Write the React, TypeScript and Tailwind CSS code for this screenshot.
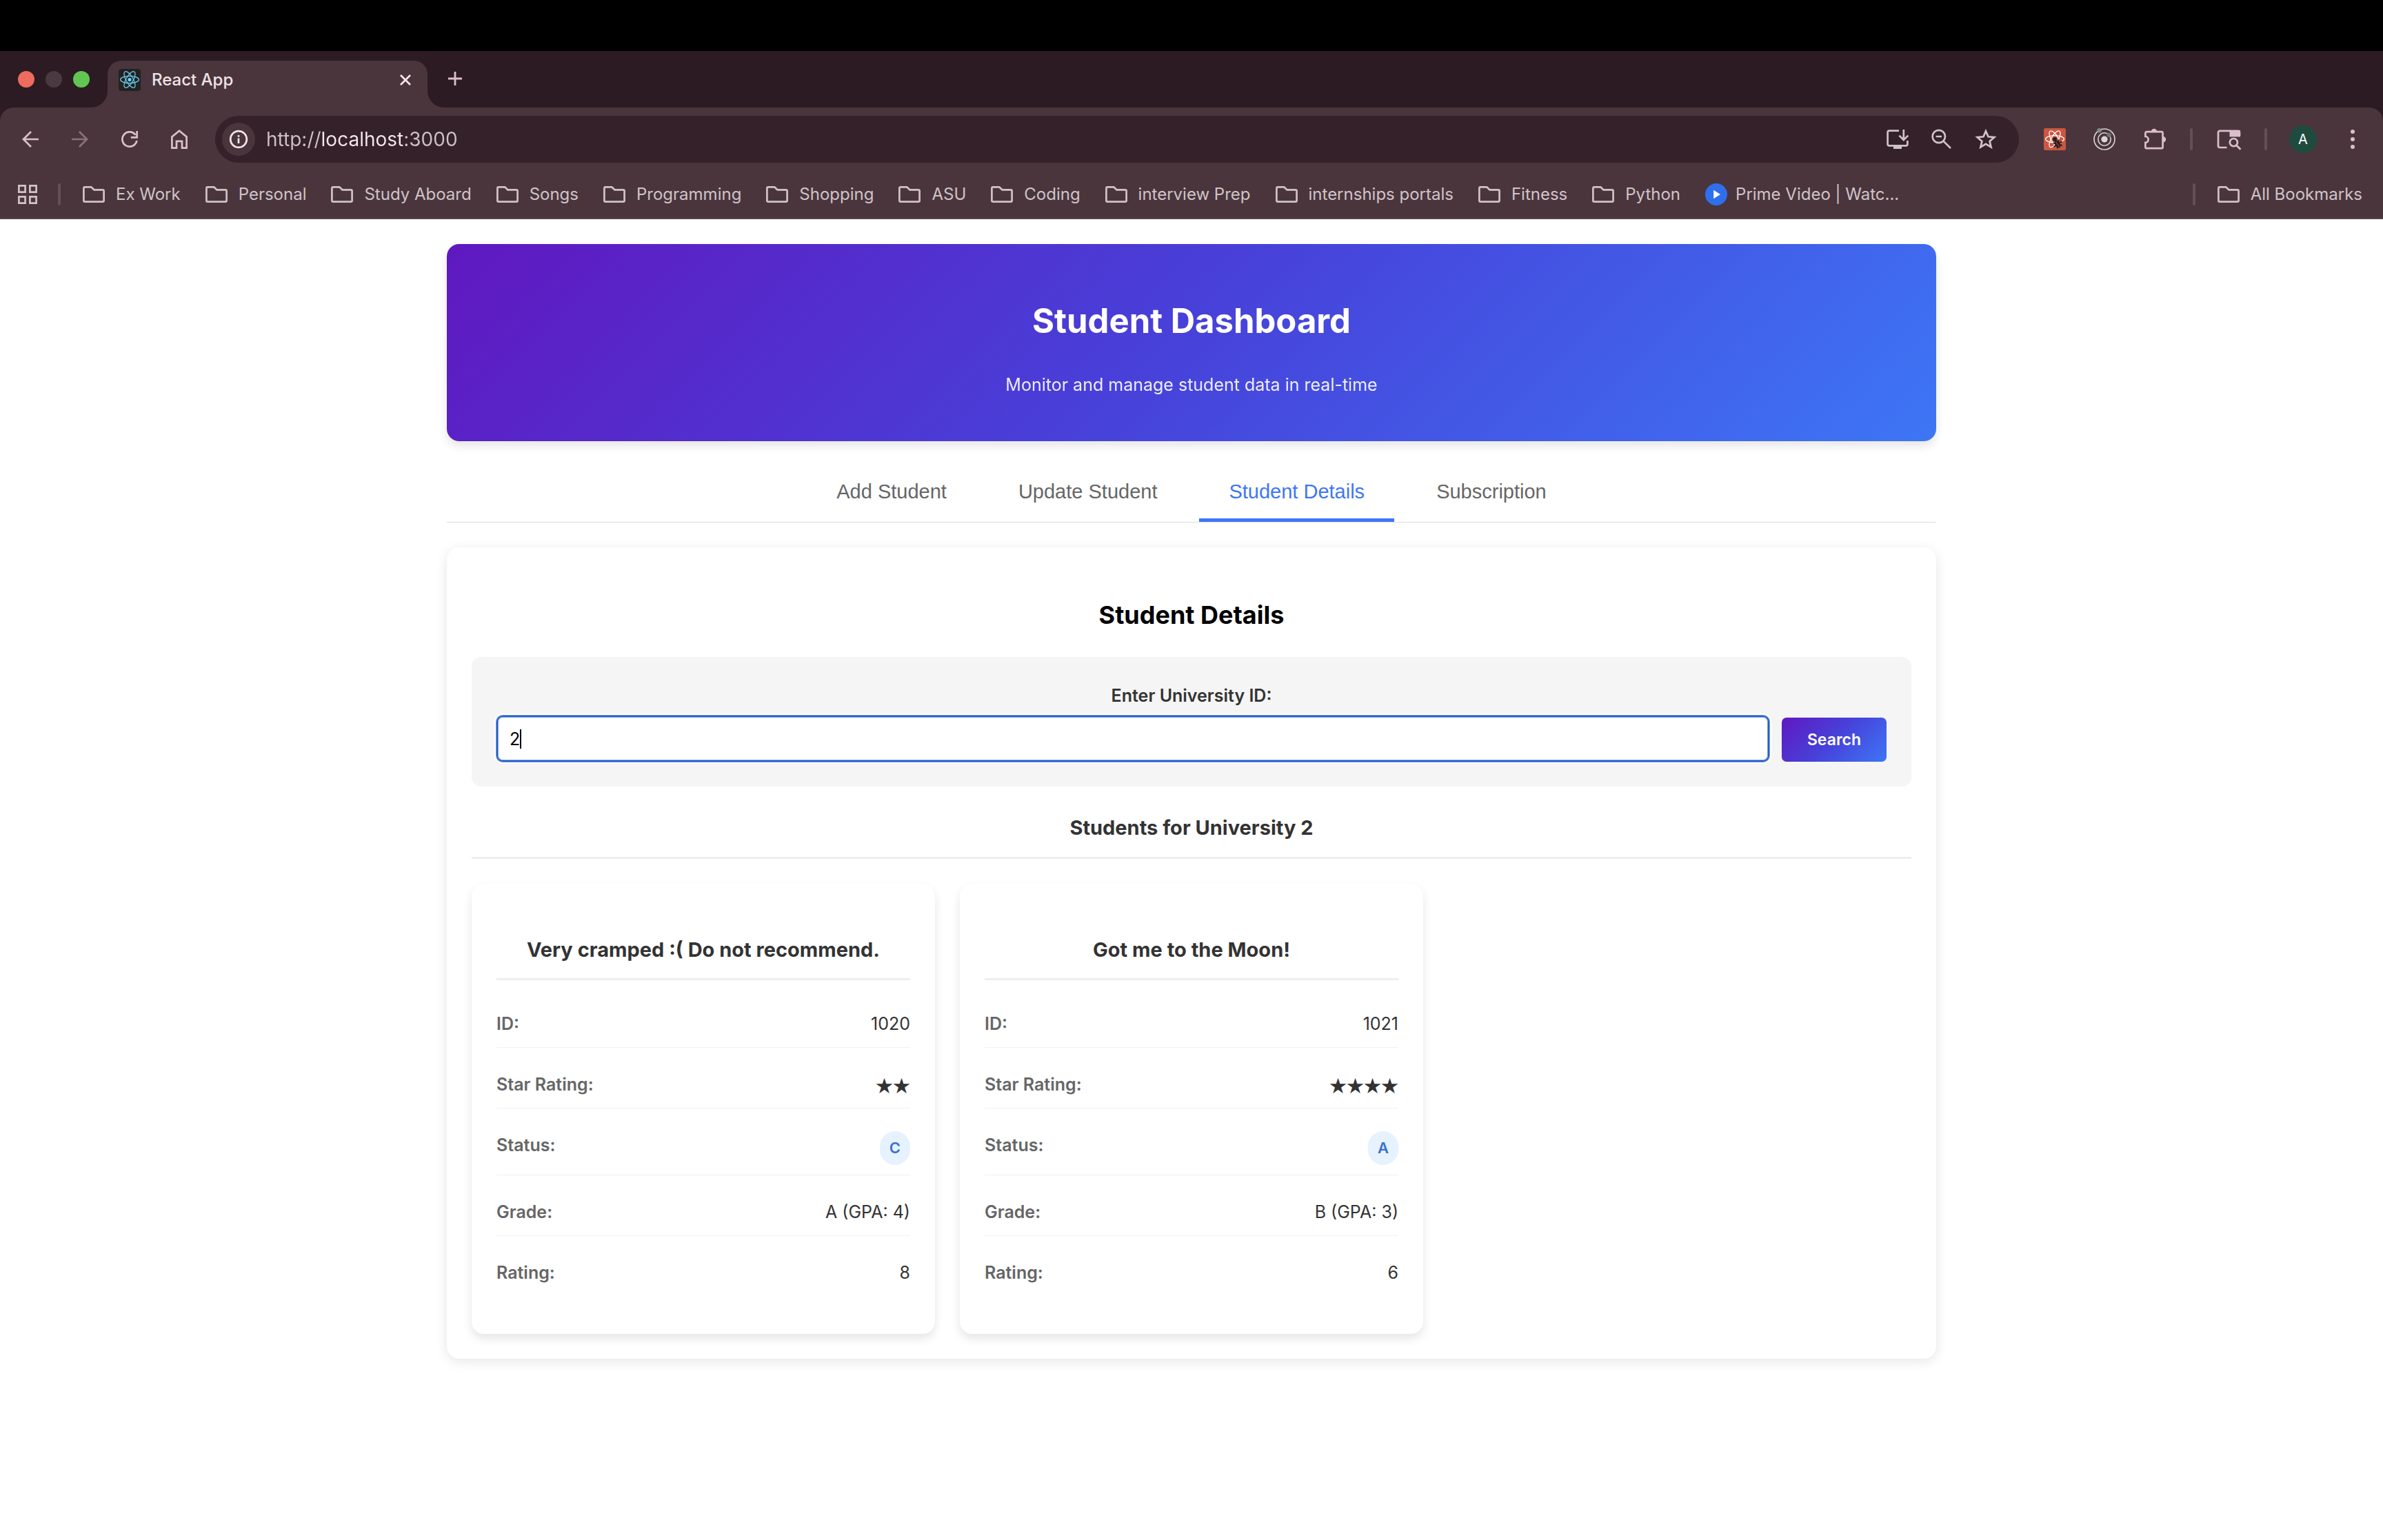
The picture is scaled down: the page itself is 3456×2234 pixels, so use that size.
import React from "react";

type IconProps = { children: React.ReactNode; className?: string };

function Icon({ children, className = "text-[#dcbfca]" }: IconProps) {
  return (
    <svg
      viewBox="0 0 32 32"
      width="32"
      height="32"
      fill="none"
      stroke="currentColor"
      strokeWidth="2.7"
      aria-hidden="true"
      className={`shrink-0 overflow-visible ${className}`}
    >
      {children}
    </svg>
  );
}

function FolderIcon() {
  return (
    <Icon className="text-[#d0c3c7]">
      <path
        d="M1.4 25.2V6.8a1.6 1.6 0 0 1 1.6-1.5h9.2l4.4 4.1H29a1.6 1.6 0 0 1 1.6 1.6v14.2a1.6 1.6 0 0 1-1.6 1.5H3a1.6 1.6 0 0 1-1.6-1.5Z"
        strokeLinejoin="round"
      />
    </Icon>
  );
}

function PrimeIcon() {
  return (
    <Icon>
      <circle cx="16" cy="16" r="16" fill="#2f6fec" stroke="none" />
      <path d="M12.2 9.8v12.4L22 16Z" fill="#fff" stroke="none" />
    </Icon>
  );
}

function ReactFavicon() {
  return (
    <Icon className="text-[#6fd3f5]">
      <rect width="32" height="32" rx="4" fill="#222222" stroke="none" />
      <circle cx="16" cy="15.5" r="2.6" fill="currentColor" stroke="none" />
      <g strokeWidth="1.2">
        <ellipse cx="16" cy="15.5" rx="13.4" ry="5.1" />
        <ellipse cx="16" cy="15.5" rx="13.4" ry="5.1" transform="rotate(60 16 15.5)" />
        <ellipse cx="16" cy="15.5" rx="13.4" ry="5.1" transform="rotate(120 16 15.5)" />
      </g>
    </Icon>
  );
}

function ReactDevToolsIcon() {
  return (
    <Icon className="text-white">
      <rect width="32" height="32" rx="2.5" fill="#cb5641" stroke="none" />
      <g strokeWidth="1.3">
        <ellipse cx="16" cy="15.8" rx="13.4" ry="5.1" />
        <ellipse cx="16" cy="15.8" rx="13.4" ry="5.1" transform="rotate(60 16 15.8)" />
        <ellipse cx="16" cy="15.8" rx="13.4" ry="5.1" transform="rotate(120 16 15.8)" />
      </g>
      <path d="M16.5 19.5l7-3.5 5 5v8h-13Z" fill="#cb5641" stroke="none" />
      <g fill="#231f20" stroke="none">
        <circle cx="16" cy="16" r="3" />
        <ellipse cx="20" cy="23" rx="3.6" ry="6" transform="rotate(-33 20 23)" />
      </g>
      <path
        d="M13.5 21.5l3.5.5M14.6 27l3.2-2.4M19.6 29.5l.4-3M21.6 16.5l-.6 3.5M26.4 19.6l-3.6 1M26.8 25.2l-3-1"
        stroke="#231f20"
        strokeWidth="1.8"
      />
      <path d="M17.6 19.6l5 7.4" stroke="#cb5641" strokeWidth="1" />
    </Icon>
  );
}

function TargetIcon() {
  return (
    <Icon className="text-[#d9d6d7]">
      <circle cx="16" cy="16" r="15" strokeWidth="1.6" />
      <circle cx="16" cy="16" r="9.2" strokeWidth="1.6" />
      <circle cx="16" cy="16" r="4.6" fill="currentColor" stroke="none" />
      <circle cx="8.6" cy="3.2" r="3.2" fill="#86898a" stroke="none" />
      <circle cx="22.6" cy="9.6" r="3.2" fill="#6f7573" stroke="none" />
    </Icon>
  );
}

const bookmarks = [
  "Ex Work",
  "Personal",
  "Study Aboard",
  "Songs",
  "Programming",
  "Shopping",
  "ASU",
  "Coding",
  "interview Prep",
  "internships portals",
  "Fitness",
  "Python",
];

const tabs = ["Add Student", "Update Student", "Student Details", "Subscription"];

const students = [
  { name: "Very cramped :( Do not recommend.", id: "1020", stars: 2, status: "C", grade: "A (GPA: 4)", rating: "8" },
  { name: "Got me to the Moon!", id: "1021", stars: 4, status: "A", grade: "B (GPA: 3)", rating: "6" },
];

function TabStrip() {
  return (
    <div className="flex h-[82px] items-end bg-[#2c1b22]">
      <div className="flex h-[82px] items-center gap-4 pl-[26px]">
        <span className="size-6 rounded-full bg-[#ed6b5f]" />
        <span className="size-6 rounded-full bg-[#4a3a40]" />
        <span className="size-6 rounded-full bg-[#61c554]" />
      </div>
      <div className="relative ml-[26px] flex h-[68px] w-[464px] items-center rounded-t-[20px] bg-[#4a353d] pr-5 pb-3 pl-4">
        <svg viewBox="0 0 24 24" className="absolute bottom-0 -left-6 size-6 text-[#4a353d]" aria-hidden="true">
          <path d="M24 0v24H0A24 24 0 0 0 24 0Z" fill="currentColor" />
        </svg>
        <ReactFavicon />
        <span className="ml-4 flex-1 text-[24px] leading-8 font-medium text-[#efe2e6]">React App</span>
        <button type="button" aria-label="Close tab" className="text-[#f3e4e9]">
          <svg viewBox="0 0 24 24" className="size-6" fill="none" stroke="currentColor" strokeWidth="2.8" aria-hidden="true">
            <path d="M5 5l14 14M19 5L5 19" />
          </svg>
        </button>
        <svg viewBox="0 0 24 24" className="absolute -right-6 bottom-0 size-6 text-[#4a353d]" aria-hidden="true">
          <path d="M0 0v24h24A24 24 0 0 1 0 0Z" fill="currentColor" />
        </svg>
      </div>
      <button type="button" aria-label="New tab" className="ml-7 h-[84px] text-[#dcbfca]">
        <svg viewBox="0 0 24 24" className="size-6" fill="none" stroke="currentColor" strokeWidth="2.8" aria-hidden="true">
          <path d="M12 2v20M2 12h20" />
        </svg>
      </button>
    </div>
  );
}

function Divider() {
  return <span className="h-8 w-1 shrink-0 rounded-full bg-[#654e57]" />;
}

function Toolbar() {
  return (
    <div className="flex h-[92px] items-center px-7">
      <div className="flex gap-10">
        <button type="button" aria-label="Back">
          <Icon>
            <path d="M28 16H6M17 5L6 16l11 11" />
          </Icon>
        </button>
        <button type="button" aria-label="Forward">
          <Icon className="text-[#8a727b]">
            <path d="M4 16h22M15 5l11 11-11 11" />
          </Icon>
        </button>
        <button type="button" aria-label="Reload">
          <Icon>
            <path d="M26.4 18A10.6 10.6 0 1 1 24.5 9.7M26.6 4v9.4H17.8" />
          </Icon>
        </button>
        <button type="button" aria-label="Home">
          <Icon>
            <path d="M5.4 28.6V12.4L16 3.8l10.6 8.6v16.2H20v-9.8h-8v9.8Z" />
          </Icon>
        </button>
      </div>
      <div className="ml-9 flex h-[68px] min-w-0 flex-1 items-center rounded-full bg-[#35212a] pr-8 pl-[10px]">
        <button
          type="button"
          aria-label="View site information"
          className="flex size-12 shrink-0 items-center justify-center rounded-full bg-[#4a353d]"
        >
          <Icon className="text-[#f1e4e8]">
            <circle cx="16" cy="16" r="11.8" />
            <path d="M16 14.6v7.4M16 10v2.7" />
          </Icon>
        </button>
        <input
          aria-label="Address"
          defaultValue="http://localhost:3000"
          className="ml-4 h-12 min-w-0 flex-1 bg-[linear-gradient(90deg,#cfc2c6_80px,#f5e8ec_80px,#f5e8ec_199px,#cfc2c6_199px)] bg-clip-text text-[28px] text-transparent outline-none"
        />
        <div className="flex gap-8">
          <button type="button" aria-label="Install app">
            <Icon className="text-[#d0c3c7]">
              <path d="M18 3.6H4a2.4 2.4 0 0 0-2.4 2.4v17A2.4 2.4 0 0 0 4 25.4h24a2.4 2.4 0 0 0 2.4-2.4v-5M24.8 2v14M18.4 10.6l6.4 6.4 6.4-6.4" />
              <path d="M10 25h12v5H10Z" fill="currentColor" stroke="none" />
            </Icon>
          </button>
          <button type="button" aria-label="Zoom">
            <Icon className="text-[#d0c3c7]">
              <circle cx="11.8" cy="12" r="9.2" />
              <path d="M7.6 12h8.4M18.4 18.6L29 29" />
            </Icon>
          </button>
          <button type="button" aria-label="Bookmark this tab">
            <Icon className="text-[#d0c3c7]">
              <path d="M16 4.2l3.5 8.1 8.8.8-6.7 5.8 2 8.6-7.6-4.6-7.6 4.6 2-8.6-6.7-5.8 8.8-.8Z" />
            </Icon>
          </button>
        </div>
      </div>
      <div className="ml-9 flex items-center gap-9">
        <div className="flex gap-10">
          <button type="button" aria-label="React Developer Tools">
            <ReactDevToolsIcon />
          </button>
          <button type="button" aria-label="Radar extension">
            <TargetIcon />
          </button>
          <button type="button" aria-label="Extensions">
            <Icon>
              <path d="M3.4 27.2v-6.4c2.6 0 4.2-2 4.2-4.4s-1.6-4.4-4.2-4.4V7.2a2 2 0 0 1 2-2h21.2a2 2 0 0 1 2 2v20a2 2 0 0 1-2 2H5.4a2 2 0 0 1-2-2Z" />
              <path d="M11.8 5a4.2 4.2 0 0 1 8.4 0ZM29 12a4.2 4.2 0 0 1 0 8.4Z" fill="currentColor" stroke="none" />
            </Icon>
          </button>
        </div>
        <Divider />
        <button type="button" aria-label="Search tabs">
          <Icon>
            <path d="M13.5 28H3.4a2.4 2.4 0 0 1-2.4-2.4V6.2a2.4 2.4 0 0 1 2.4-2.4h26.2a2.4 2.4 0 0 1 2.4 2.4V11" />
            <path d="M17.5 3H33v9.4H17.5Z" fill="currentColor" stroke="none" />
            <circle cx="23.4" cy="20.6" r="5.6" />
            <path d="M27.4 24.8l6 6" />
          </Icon>
        </button>
        <Divider />
        <button
          type="button"
          aria-label="Profile"
          className="-ml-1 flex size-10 items-center justify-center rounded-full bg-[#1f4b3f] text-[20px] text-white"
        >
          A
        </button>
        <button type="button" aria-label="Menu">
          <Icon>
            <g fill="currentColor" stroke="none">
              <circle cx="16" cy="5" r="3" />
              <circle cx="16" cy="16" r="3" />
              <circle cx="16" cy="27" r="3" />
            </g>
          </Icon>
        </button>
      </div>
    </div>
  );
}

function BookmarkBar() {
  return (
    <nav aria-label="Bookmarks" className="flex h-[70px] items-center border-b-2 border-[#50474a] pr-[30px] pl-6 text-[24px] text-[#d0c3c7]">
      <button type="button" aria-label="Tab groups">
        <Icon className="text-[#d0c3c7]">
          <path d="M3.4 3.4h9.2v9.2H3.4ZM19.4 3.4h9.2v9.2h-9.2ZM3.4 19.4h9.2v9.2H3.4ZM19.4 19.4h9.2v9.2h-9.2Z" />
        </Icon>
      </button>
      <span className="ml-7 flex">
        <Divider />
      </span>
      <div className="ml-8 flex gap-9 whitespace-nowrap">
        {bookmarks.map((label) => (
          <a key={label} href="#" className="flex items-center gap-4">
            <FolderIcon />
            {label}
          </a>
        ))}
        <a href="#" className="flex items-center gap-3">
          <PrimeIcon />
          Prime Video | Watc...
        </a>
      </div>
      <div className="ml-auto flex items-center gap-8 whitespace-nowrap">
        <Divider />
        <a href="#" className="flex items-center gap-4">
          <FolderIcon />
          All Bookmarks
        </a>
      </div>
    </nav>
  );
}

function DetailRow({ label, last = false, children }: { label: string; last?: boolean; children: React.ReactNode }) {
  return (
    <div
      className={`flex items-start justify-between border-b pt-[33px] pb-[14px] text-[25px] leading-10 ${
        last ? "border-transparent" : "border-[#f0f0f0]"
      }`}
    >
      <dt className="font-semibold text-[#666]">{label}</dt>
      <dd className="text-[#333]">{children}</dd>
    </div>
  );
}

function StudentCard({ student }: { student: (typeof students)[number] }) {
  return (
    <article className="rounded-[18px] bg-white p-9 shadow-[0_7px_14px_rgba(0,0,0,0.1)]">
      <h4 className="mt-[42px] mb-[10px] border-b-3 border-[#eee] pb-[23px] text-center text-[29px] leading-9 font-bold text-[#333]">
        {student.name}
      </h4>
      <dl className="mb-[18px]">
        <DetailRow label="ID:">{student.id}</DetailRow>
        <DetailRow label="Star Rating:">
          <span className="block font-['Noto_Sans_CJK_JP',sans-serif]">{"★".repeat(student.stars)}</span>
        </DetailRow>
        <DetailRow label="Status:">
          <span className="block rounded-[22px] bg-[#e6f2fd] px-[14px] text-[22px] leading-[49px] font-semibold text-[#3a70d0]">
            {student.status}
          </span>
        </DetailRow>
        <DetailRow label="Grade:">{student.grade}</DetailRow>
        <DetailRow label="Rating:" last>
          {student.rating}
        </DetailRow>
      </dl>
    </article>
  );
}

export default function App() {
  return (
    <div className="min-h-screen bg-white font-[Inter,'Liberation_Sans',sans-serif]">
      <div className="h-[74px] bg-black" />
      <header className="bg-[#2c1b22]">
        <TabStrip />
        <div className="rounded-t-[20px] bg-[#4a353d]">
          <Toolbar />
          <BookmarkBar />
        </div>
      </header>

      <main className="mx-auto w-full max-w-[2160px] py-9">
        <section className="rounded-[18px] bg-[linear-gradient(135deg,#6018c0,#4742da,#3d76f5)] pt-[82px] pb-[66px] text-center text-white shadow-[0_7px_14px_rgba(0,0,0,0.1)]">
          <h1 className="text-[49px] leading-[60px] font-bold">Student Dashboard</h1>
          <p className="mt-[46px] text-[25px] leading-8 opacity-90">Monitor and manage student data in real-time</p>
        </section>

        <nav className="mt-9 flex justify-center gap-[18px] border-b border-[#ddd]">
          {tabs.map((tab) => (
            <button
              key={tab}
              type="button"
              className={`border-b-5 px-[43px] pt-5 pb-[22px] font-['Liberation_Sans'] text-[29px] leading-[34px] ${
                tab === "Student Details" ? "border-[#3d76f5] text-[#3d76f5]" : "border-transparent text-[#666]"
              }`}
            >
              {tab}
            </button>
          ))}
        </nav>

        <section className="mt-9 rounded-[18px] bg-white p-9 shadow-[0_4px_18px_rgba(0,0,0,0.1)]">
          <h2 className="mt-[38px] text-center text-[36px] leading-[48px] font-bold text-black">Student Details</h2>

          <form className="mt-[37px] rounded-[14px] bg-[#f5f5f5] p-9" onSubmit={(e) => e.preventDefault()}>
            <label htmlFor="university" className="block text-center text-[25px] leading-10 font-semibold text-[#333]">
              Enter University ID:
            </label>
            <div className="mt-[9px] flex items-end gap-[18px]">
              <div className="relative flex min-w-0 flex-1">
                <input
                  id="university"
                  defaultValue="2"
                  className="h-[67px] min-w-0 flex-1 rounded-[9px] border-2 border-[#2660c8] bg-white px-[17px] text-[25px] text-black shadow-[0_0_0_1px_#7a9ddd,0_0_0_3px_#fff,inset_0_0_0_1px_#7a9ddd] outline-none"
                />
                <span className="absolute top-5 left-[34px] h-7 w-0.5 bg-black" />
              </div>
              <button
                type="submit"
                className="h-16 rounded-[7px] bg-[linear-gradient(135deg,#6018c0,#4742da,#3d76f5)] px-[37px] text-[23px] font-semibold text-white"
              >
                Search
              </button>
            </div>
          </form>

          <h3 className="mt-[42px] border-b-3 border-[#eee] pb-6 text-center text-[29px] leading-9 font-bold text-[#333]">
            Students for University 2
          </h3>

          <div className="mt-9 grid grid-cols-3 gap-9">
            {students.map((student) => (
              <StudentCard key={student.id} student={student} />
            ))}
          </div>
        </section>
      </main>
    </div>
  );
}
